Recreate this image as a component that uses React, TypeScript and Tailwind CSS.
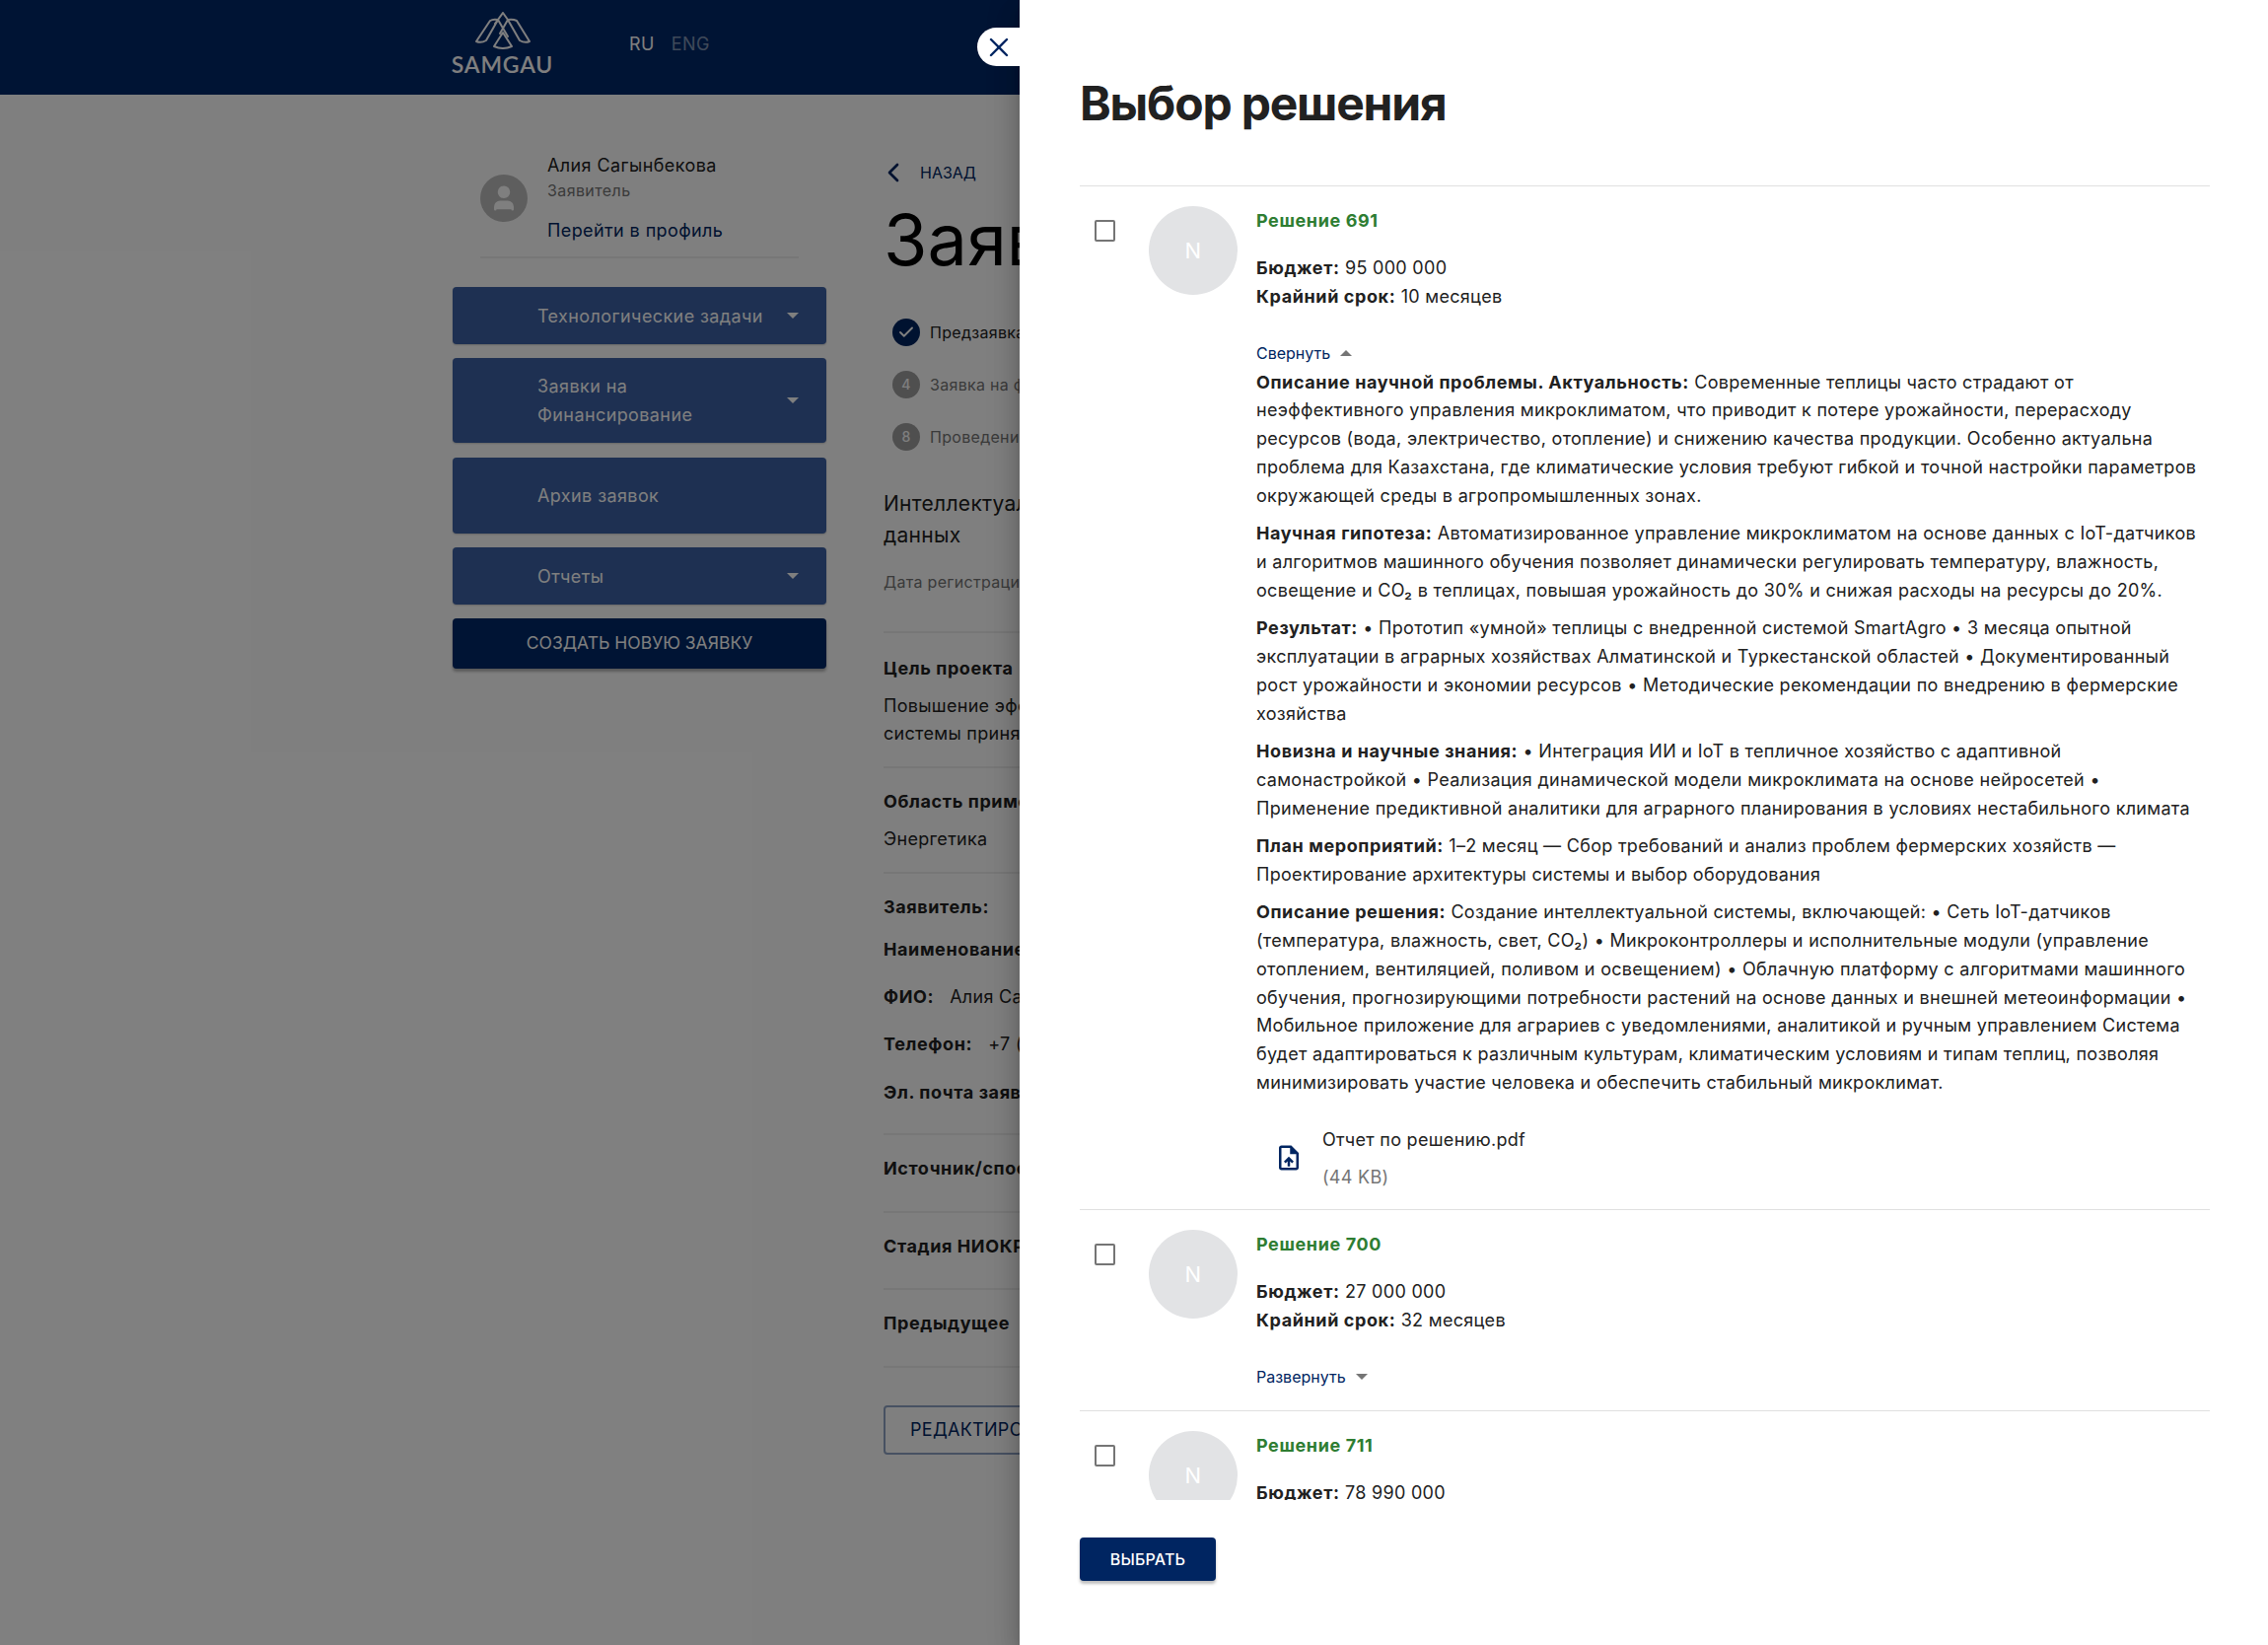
import React from 'react';
import { ChevronLeft, X, Check, User } from 'lucide-react';

const Caret = ({ up = false, className = '' }: { up?: boolean; className?: string }) => (
  <svg viewBox="0 0 10 5" className={`h-[6px] w-[12px] ${className}`}>
    <path d={up ? 'M0 5 L5 0 L10 5 Z' : 'M0 0 L5 5 L10 0 Z'} fill="currentColor" />
  </svg>
);

function Logo() {
  return (
    <div className="mb-[10px] flex w-[101px] flex-col items-center">
      <svg viewBox="0 0 56 38" className="h-[38px] w-[56px]" fill="none" stroke="#ffffff" strokeWidth="2" strokeLinejoin="round" strokeLinecap="round">
        <path d="M1 30 L15 9 Q18 7 23 8 L11 29 Q6 32 1 30 Z" />
        <path d="M55 30 L42 9 Q38 7 33 8 L45 29 Q50 32 55 30 Z" />
        <path d="M20 12 L28 1 L33 8" />
        <path d="M23 8 L33 25" />
        <path d="M33 8 L25 22" />
        <path d="M28 21 L19 35 Q28 39 37 35 Z" />
      </svg>
      <span className="mt-[6px] text-[23px] leading-[18px] font-semibold tracking-[0.8px] text-white font-['Lato',sans-serif]">SAMGAU</span>
    </div>
  );
}

function NavButton({ children, caret, className = '' }: { children: React.ReactNode; caret?: boolean; className?: string }) {
  return (
    <div className={`flex items-center justify-between rounded-[4px] bg-[#3c60a4] pl-[86px] pr-[28px] text-[18px] leading-[29px] tracking-[0.4px] text-white shadow-[0_1px_2px_rgba(0,0,0,0.2)] ${className}`}>
      <span>{children}</span>
      {caret && <Caret className="text-white" />}
    </div>
  );
}

function Step({ mark, text, done }: { mark: string; text: string; done?: boolean }) {
  return (
    <div className="flex h-[29px] items-center gap-[10px] whitespace-nowrap">
      <div className={`flex h-[28px] w-[28px] items-center justify-center rounded-full text-[14px] font-medium text-white ${done ? 'bg-[#002561]' : 'bg-[#9e9e9e]'}`}>
        {done ? <Check size={18} strokeWidth={2.5} /> : mark}
      </div>
      <span className={`text-[16px] ${done ? 'text-[#212121]' : 'text-[#757575]'}`}>{text}</span>
    </div>
  );
}

const Rule = ({ className = '' }: { className?: string }) => <div className={`h-[2px] bg-[#eeeeee] ${className}`} />;

function Background() {
  return (
    <div className="h-[1668px] w-[2300px] overflow-hidden bg-white text-[#212121]">
      <header className="flex h-[96px] items-center bg-[#002868] pl-[459px]">
        <Logo />
        <div className="mb-[6px] ml-[78px] flex gap-[17px] text-[18px] leading-[24px] tracking-[0.4px]">
          <span className="text-white">RU</span>
          <span className="text-white/50">ENG</span>
        </div>
      </header>
      <div className="flex pl-[459px]">
        <aside className="w-[379px]">
          <div className="mx-[28px] flex h-[166px] items-end border-b-2 border-[#eeeeee] pb-[13px]">
            <div className="flex items-center">
              <div className="flex h-[48px] w-[48px] items-center justify-center rounded-full bg-[#bdbdbd] text-white">
                <User size={30} fill="currentColor" />
              </div>
              <div className="ml-[20px] tracking-[0.4px]">
                <div className="text-[18px] leading-[26px]">Алия Сагынбекова</div>
                <div className="text-[16px] leading-[24px] text-[#757575]">Заявитель</div>
                <div className="mt-[16px] text-[18px] leading-[26px] text-[#002561]">Перейти в профиль</div>
              </div>
            </div>
          </div>
          <div className="mt-[29px] flex flex-col gap-[14px]">
            <NavButton caret className="h-[58px]">Технологические задачи</NavButton>
            <NavButton caret className="h-[86px]">Заявки на<br />Финансирование</NavButton>
            <NavButton className="mt-[1px] h-[77px]">Архив заявок</NavButton>
            <NavButton caret className="h-[58px]">Отчеты</NavButton>
            <div className="flex h-[51px] items-center justify-center rounded-[4px] bg-[#002868] text-[17.5px] tracking-normal text-white shadow-[0_3px_3px_rgba(0,0,0,0.3)]">СОЗДАТЬ НОВУЮ ЗАЯВКУ</div>
          </div>
        </aside>
        <main className="ml-[58px] w-[1200px] text-[18px] leading-[28px]">
          <div className="mt-[64px] flex h-[30px] items-center text-[16px] tracking-normal text-[#002561]">
            <ChevronLeft size={32} strokeWidth={2} className="-ml-[6px]" />
            <span className="ml-[11px]">НАЗАД</span>
          </div>
          <h1 className="mt-[10px] text-[72px] leading-[86px] font-normal tracking-normal text-black">Заявка</h1>
          <div className="ml-[9px] mt-[36px] flex flex-col gap-[24px]">
            <Step done mark="" text="Предзаявка" />
            <Step mark="4" text="Заявка на финансирование" />
            <Step mark="8" text="Проведение экспертизы" />
          </div>
          <div className="mt-[38px] text-[21px] leading-[32px]">Интеллектуальная система<br />данных</div>
          <div className="mt-[17px] text-[16px] leading-[28px] text-[#757575]">Дата регистрации</div>
          <Rule className="mt-[36px]" />
          <div className="mt-[22px] font-bold tracking-[0.6px]">Цель проекта</div>
          <div className="mt-[10px]">Повышение эффективности<br />системы принятия решений</div>
          <Rule className="mt-[19px]" />
          <div className="mt-[20px] font-bold tracking-[0.6px]">Область применения</div>
          <div className="mt-[10px]">Энергетика</div>
          <Rule className="mt-[19px]" />
          <div className="mt-[20px] font-bold tracking-[0.6px]">Заявитель:</div>
          <div className="mt-[15px] font-bold tracking-[0.6px]">Наименование</div>
          <div className="mt-[20px]"><b className="tracking-[0.6px]">ФИО:</b>&nbsp;&nbsp; Алия Сагынбекова</div>
          <div className="mt-[20px]"><b className="tracking-[0.6px]">Телефон:</b>&nbsp;&nbsp; +7 (700)</div>
          <div className="mt-[21px] font-bold tracking-[0.6px]">Эл. почта заявителя</div>
          <Rule className="mt-[27px]" />
          <div className="mt-[20px] font-bold tracking-[0.6px]">Источник/способ</div>
          <Rule className="mt-[29px]" />
          <div className="mt-[20px] font-bold tracking-[0.6px]">Стадия НИОКР</div>
          <Rule className="mt-[28px]" />
          <div className="mt-[20px] font-bold tracking-[0.6px]">Предыдущее</div>
          <Rule className="mt-[29px]" />
          <div className="mt-[38px] flex h-[50px] w-[300px] items-center rounded-[4px] border-2 border-[#8fa3c4] pl-[25px] text-[18px] text-[#002561]">РЕДАКТИРОВАТЬ</div>
        </main>
      </div>
    </div>
  );
}

function SolutionHead({ title, budget, term }: { title: string; budget: string; term?: string }) {
  return (
    <>
      <div className="text-[18px] leading-[29px] font-bold tracking-[0.6px] text-[#2e7d32]">{title}</div>
      <div className="mt-[20px]"><b className="tracking-[0.6px]">Бюджет:</b> {budget}</div>
      {term && <div><b className="tracking-[0.6px]">Крайний срок:</b> {term}</div>}
    </>
  );
}

function Avatar() {
  return (
    <div className="ml-[34px] mt-[20px] flex h-[90px] w-[90px] shrink-0 items-center justify-center rounded-full bg-[#e2e3e5] text-[22px] text-white">N</div>
  );
}

function Checkbox() {
  return <div className="ml-[15px] mt-[34px] h-[22px] w-[21px] shrink-0 rounded-[2px] border-[2px] border-[#757575]" />;
}

const paragraphs: [string, string][] = [
  ['Описание научной проблемы. Актуальность:', ' Современные теплицы часто страдают от неэффективного управления микроклиматом, что приводит к потере урожайности, перерасходу ресурсов (вода, электричество, отопление) и снижению качества продукции. Особенно актуальна проблема для Казахстана, где климатические условия требуют гибкой и точной настройки параметров окружающей среды в агропромышленных зонах.'],
  ['Научная гипотеза:', ' Автоматизированное управление микроклиматом на основе данных с IoT-датчиков и алгоритмов машинного обучения позволяет динамически регулировать температуру, влажность, освещение и CO₂ в теплицах, повышая урожайность до 30% и снижая расходы на ресурсы до 20%.'],
  ['Результат:', ' • Прототип «умной» теплицы с внедренной системой SmartAgro • 3 месяца опытной эксплуатации в аграрных хозяйствах Алматинской и Туркестанской областей • Документированный рост урожайности и экономии ресурсов • Методические рекомендации по внедрению в фермерские хозяйства'],
  ['Новизна и научные знания:', ' • Интеграция ИИ и IoT в тепличное хозяйство с адаптивной самонастройкой • Реализация динамической модели микроклимата на основе нейросетей • Применение предиктивной аналитики для аграрного планирования в условиях нестабильного климата'],
  ['План мероприятий:', ' 1–2 месяц — Сбор требований и анализ проблем фермерских хозяйств — Проектирование архитектуры системы и выбор оборудования'],
  ['Описание решения:', ' Создание интеллектуальной системы, включающей: • Сеть IoT-датчиков (температура, влажность, свет, CO₂) • Микроконтроллеры и исполнительные модули (управление отоплением, вентиляцией, поливом и освещением) • Облачную платформу с алгоритмами машинного обучения, прогнозирующими потребности растений на основе данных и внешней метеоинформации • Мобильное приложение для аграриев с уведомлениями, аналитикой и ручным управлением Система будет адаптироваться к различным культурам, климатическим условиям и типам теплиц, позволяя минимизировать участие человека и обеспечить стабильный микроклимат.'],
];

function FileIcon() {
  return (
    <svg viewBox="0 0 24 24" className="h-[30px] w-[30px] text-[#002561]" fill="currentColor">
      <path d="M14 2H6c-1.1 0-2 .9-2 2v16c0 1.1.9 2 2 2h12c1.1 0 2-.9 2-2V8l-6-6zm4 18H6V4h7v5h5v11zM8 15.01l1.41 1.41L11 14.84V19h2v-4.16l1.59 1.59L16 15.01 12.01 11 8 15.01z" />
    </svg>
  );
}

export default function App() {
  return (
    <div className="relative h-[1668px] w-[2300px] overflow-hidden font-['Inter',sans-serif] tracking-[0.3px]">
      <Background />
      <div className="absolute inset-0 bg-black/50" />
      <div className="absolute inset-y-0 right-0 flex w-[1266px] flex-col bg-white pl-[61px] pr-[59px] text-[18px] leading-[28.8px] text-[#212121] shadow-[0_8px_10px_-5px_rgba(0,0,0,0.2),0_16px_24px_2px_rgba(0,0,0,0.14),0_6px_30px_5px_rgba(0,0,0,0.12)]">
        <button className="absolute left-[-43px] top-[28px] flex h-[39px] w-[43px] items-center justify-center rounded-l-[20px] bg-white text-[#002561]">
          <X size={32} strokeWidth={1.8} />
        </button>
        <h2 className="mt-[70px] text-[48px] leading-[70px] font-bold tracking-[-1.2px] text-[#212121]">Выбор решения</h2>
        <div className="mt-[48px] h-[1333px] overflow-hidden border-t border-[#e0e0e0]">
          <div className="flex h-[1038px] border-b border-[#e0e0e0]">
            <Checkbox />
            <Avatar />
            <div className="ml-[19px] min-w-0 flex-1 pt-[20px]">
              <SolutionHead title="Решение 691" budget="95 000 000" term="10 месяцев" />
              <div className="mb-[1px] mt-[28px] flex items-center gap-[10px] text-[16px] leading-[29px] tracking-normal text-[#002561]">Свернуть <Caret up className="text-[#757575]" /></div>
              {paragraphs.map(([head, body]) => (
                <p key={head} className="mb-[9.6px]"><b className="tracking-[0.6px]">{head}</b>{body}</p>
              ))}
              <div className="ml-[18px] mt-[28px] flex items-center">
                <FileIcon />
                <div className="ml-[19px]">
                  <div className="text-[18px] leading-[29px]">Отчет по решению.pdf</div>
                  <div className="mt-[9px] text-[18px] leading-[29px] text-[#757575]">(44 KB)</div>
                </div>
              </div>
            </div>
          </div>
          <div className="flex h-[204px] border-b border-[#e0e0e0]">
            <Checkbox />
            <Avatar />
            <div className="ml-[19px] flex-1 pt-[20px]">
              <SolutionHead title="Решение 700" budget="27 000 000" term="32 месяцев" />
              <div className="mt-[28px] flex items-center gap-[10px] text-[16px] leading-[29px] tracking-normal text-[#002561]">Развернуть <Caret className="text-[#757575]" /></div>
            </div>
          </div>
          <div className="flex h-[204px]">
            <Checkbox />
            <Avatar />
            <div className="ml-[19px] flex-1 pt-[20px]">
              <SolutionHead title="Решение 711" budget="78 990 000" />
            </div>
          </div>
        </div>
        <button className="mt-[38px] h-[44px] w-[138px] rounded-[4px] bg-[#002561] text-[16px] font-medium tracking-[0.2px] text-white shadow-[0_3px_3px_rgba(0,0,0,0.25)]">ВЫБРАТЬ</button>
      </div>
    </div>
  );
}
